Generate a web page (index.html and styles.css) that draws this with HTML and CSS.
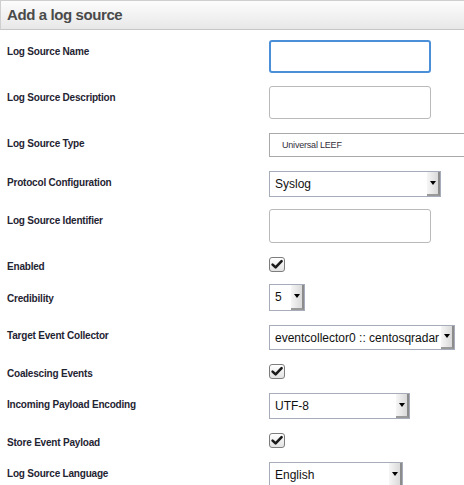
FILE: index.html
```html
<!DOCTYPE html>
<html>
<head>
<meta charset="utf-8">
<title>Add a log source</title>
<link rel="stylesheet" href="styles.css">
</head>
<body>
<div class="panel">
  <div class="panel-header">Add a log source</div>
  <div class="form">
    <div class="row row-text">
      <div class="label">Log Source Name</div>
      <div class="input input-focus"></div>
    </div>
    <div class="row row-text">
      <div class="label">Log Source Description</div>
      <div class="input"></div>
    </div>
    <div class="row row-type">
      <div class="label">Log Source Type</div>
      <div class="type-box">Universal LEEF</div>
    </div>
    <div class="row row-select">
      <div class="label">Protocol Configuration</div>
      <div class="select w-protocol"><span class="select-value">Syslog</span><span class="select-btn"><svg width="6" height="4" viewBox="0 0 6 4"><path d="M0 0H6L3 4Z" fill="#000"/></svg></span></div>
    </div>
    <div class="row row-text">
      <div class="label">Log Source Identifier</div>
      <div class="input input-tall"></div>
    </div>
    <div class="row row-check">
      <div class="label">Enabled</div>
      <div class="checkbox"><svg width="16" height="15" viewBox="0 0 16 15"><path d="M3.6 7.6 L6.6 10.4 L12.6 4.2" fill="none" stroke="#1a1a1a" stroke-width="2.6" stroke-linecap="round" stroke-linejoin="round"/></svg></div>
    </div>
    <div class="row row-select">
      <div class="label label-low">Credibility</div>
      <div class="select w-cred"><span class="select-value">5</span><span class="select-btn"><svg width="6" height="4" viewBox="0 0 6 4"><path d="M0 0H6L3 4Z" fill="#000"/></svg></span></div>
    </div>
    <div class="row row-select">
      <div class="label">Target Event Collector</div>
      <div class="select w-target"><span class="select-value">eventcollector0 :: centosqradar</span><span class="select-btn"><svg width="6" height="4" viewBox="0 0 6 4"><path d="M0 0H6L3 4Z" fill="#000"/></svg></span></div>
    </div>
    <div class="row row-check">
      <div class="label">Coalescing Events</div>
      <div class="checkbox"><svg width="16" height="15" viewBox="0 0 16 15"><path d="M3.6 7.6 L6.6 10.4 L12.6 4.2" fill="none" stroke="#1a1a1a" stroke-width="2.6" stroke-linecap="round" stroke-linejoin="round"/></svg></div>
    </div>
    <div class="row row-select">
      <div class="label">Incoming Payload Encoding</div>
      <div class="select w-enc"><span class="select-value">UTF-8</span><span class="select-btn"><svg width="6" height="4" viewBox="0 0 6 4"><path d="M0 0H6L3 4Z" fill="#000"/></svg></span></div>
    </div>
    <div class="row row-check">
      <div class="label">Store Event Payload</div>
      <div class="checkbox"><svg width="16" height="15" viewBox="0 0 16 15"><path d="M3.6 7.6 L6.6 10.4 L12.6 4.2" fill="none" stroke="#1a1a1a" stroke-width="2.6" stroke-linecap="round" stroke-linejoin="round"/></svg></div>
    </div>
    <div class="row row-select">
      <div class="label">Log Source Language</div>
      <div class="select w-lang"><span class="select-value">English</span><span class="select-btn"><svg width="6" height="4" viewBox="0 0 6 4"><path d="M0 0H6L3 4Z" fill="#000"/></svg></span></div>
    </div>
  </div>
</div>
</body>
</html>
```

FILE: styles.css
```css
html, body {
  margin: 0;
  padding: 0;
  width: 464px;
  height: 485px;
  overflow: hidden;
  background: #ffffff;
  font-family: "Liberation Sans", Arial, sans-serif;
}

.panel {
  width: 480px;
}

.panel-header {
  height: 28px;
  line-height: 27px;
  border-top: 1px solid #cfcfcf;
  border-bottom: 1px solid #c6c6c6;
  border-left: 1px solid #cfcfcf;
  background: linear-gradient(to bottom, #fcfcfc, #e8e8e8);
  padding-left: 6px;
  font-size: 15px;
  font-weight: bold;
  letter-spacing: -0.4px;
  color: #4a4a4a;
}

.form {
  display: flex;
  flex-direction: column;
  padding-top: 10px;
}

.row {
  display: flex;
  align-items: flex-start;
}

.row-text { height: 46px; }
.row-type { height: 39px; }
.row-select { height: 38px; }
.row-check { height: 31px; }

.label {
  width: 262px;
  flex: none;
  padding-left: 7px;
  padding-top: 6px;
  font-size: 10px;
  line-height: 12px;
  font-weight: bold;
  letter-spacing: -0.2px;
  color: #1f2433;
}

.label-low { padding-top: 7px; }

.input {
  box-sizing: border-box;
  width: 162px;
  height: 33px;
  border: 1px solid #b9b9b9;
  border-radius: 3px;
  background: #fff;
}

.input-focus {
  border: 2px solid #4a8fd8;
}

.input-tall {
  height: 34px;
  margin-top: 0;
}

.type-box {
  box-sizing: border-box;
  width: 220px;
  height: 24px;
  margin-top: 1px;
  border: 1px solid #a9a9a9;
  padding-left: 12px;
  font-size: 9px;
  line-height: 22px;
  letter-spacing: -0.2px;
  color: #33303a;
}

.select {
  box-sizing: border-box;
  display: flex;
  height: 26px;
  border: 1px solid #a6acb9;
  background: #fff;
  overflow: hidden;
}

.select-value {
  flex: 1;
  min-width: 0;
  padding-left: 5px;
  font-size: 12px;
  line-height: 24px;
  color: #111;
  white-space: nowrap;
  overflow: hidden;
}

.select-btn {
  box-sizing: border-box;
  flex: none;
  width: 13px;
  height: 100%;
  display: flex;
  align-items: center;
  justify-content: center;
  padding-bottom: 1px;
  background: linear-gradient(to right, #f6f6f6, #dadada);
  border-right: 2px solid #8c8c8c;
  border-bottom: 2px solid #9a9a9a;
}

.w-protocol { width: 172px; }
.w-cred { width: 36px; margin-top: -2px; height: 27px; }
.w-target { width: 186px; margin-top: 1px; height: 25px; }
.w-enc { width: 141px; }
.w-lang { width: 134px; }

.checkbox {
  box-sizing: border-box;
  width: 16px;
  height: 15px;
  margin-top: 2px;
  border: 1px solid #7d7d7d;
  border-radius: 3px;
  background: linear-gradient(to bottom, #ffffff, #e2e2e2);
  position: relative;
}

.checkbox svg {
  position: absolute;
  left: -1px;
  top: -1px;
}
```
